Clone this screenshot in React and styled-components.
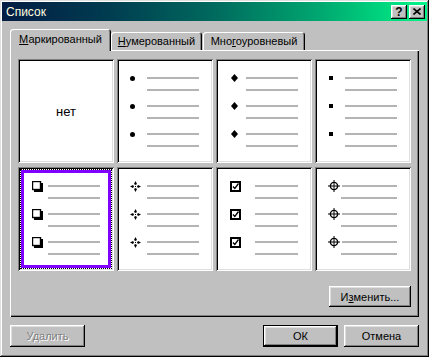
import React from 'react';
import styled, { createGlobalStyle, css } from 'styled-components';

const GlobalStyle = createGlobalStyle`
  html, body { margin: 0; padding: 0; background: #c0c0c0; }
  body { font-family: "Liberation Sans", Arial, sans-serif; font-size: 11px; color: #000; }
`;

const raised = css`
  box-shadow: inset -1px -1px #000, inset 1px 1px #fff, inset -2px -2px #808080, inset 2px 2px #dfdfdf;
`;

const Window = styled.div`
  width: 429px;
  height: 357px;
  box-sizing: border-box;
  padding: 2px;
  background: #c0c0c0;
  display: flex;
  flex-direction: column;
  box-shadow: inset -1px -1px #000, inset 1px 1px #dfdfdf, inset -2px -2px #808080, inset 2px 2px #fff;
`;

const TitleBar = styled.div`
  height: 19px;
  display: flex;
  align-items: center;
  padding: 0 2px 0 4px;
  background: linear-gradient(90deg, #041c44 0%, #003c50 25%, #006a5e 50%, #00a870 75%, #00f688 100%);
  color: #ffffe0;
  font-size: 12px;
`;

const TitleText = styled.div`
  flex: 1;
`;

const TitleButton = styled.div`
  width: 16px;
  height: 14px;
  margin-left: ${p => p.$gap || 0}px;
  background: #c0c0c0;
  ${raised};
  display: flex;
  align-items: center;
  justify-content: center;
  color: #000;
  font-weight: bold;
  font-size: 12px;
  line-height: 14px;
`;

const Body = styled.div`
  flex: 1;
  padding: 8px 8px 8px 8px;
  display: flex;
  flex-direction: column;
`;

const TabStrip = styled.div`
  height: 21px;
  display: flex;
  align-items: flex-end;
  position: relative;
  z-index: 1;
`;

const Tab = styled.div`
  box-sizing: border-box;
  width: ${p => p.$w}px;
  height: ${p => (p.$active ? 22 : 18)}px;
  margin-bottom: ${p => (p.$active ? -1 : 0)}px;
  margin-right: ${p => p.$mr || 0}px;
  background: #c0c0c0;
  border-radius: 3px 3px 0 0;
  box-shadow: inset 1px 1px #fff, inset -1px 0 #000, inset -2px 0 #808080;
  display: flex;
  align-items: center;
  justify-content: center;
  padding-bottom: ${p => (p.$active ? 2 : 0)}px;
  white-space: nowrap;
`;

const Panel = styled.div`
  padding: 9px 8px 10px 8px;
  background: #c0c0c0;
  box-shadow: inset 1px 1px #fff, inset -1px -1px #000, inset -2px -2px #808080;
  display: flex;
  flex-direction: column;
`;

const Grid = styled.div`
  display: grid;
  grid-template-columns: repeat(4, 96px);
  grid-auto-rows: 104px;
  column-gap: 3px;
  row-gap: 4px;
`;

const Cell = styled.div`
  position: relative;
  box-sizing: border-box;
  background: #fff;
  padding: 13px 14px 0 0;
  box-shadow: inset 1px 1px #808080, inset -1px -1px #fff, inset 2px 2px #000, inset -2px -2px #dfdfdf;
  display: flex;
  flex-direction: column;
  ${p => p.$selected && css`
    &::before {
      content: '';
      position: absolute;
      inset: 2px;
      border: 1px dotted #000;
      box-shadow: inset 0 0 0 3px #8000ff;
    }
  `}
`;

const NoneCell = styled(Cell)`
  padding: 0;
  align-items: center;
  justify-content: center;
  font-size: 13px;
`;

const Group = styled.div`
  height: 28px;
  display: flex;
  flex-direction: column;
`;

const Row = styled.div`
  height: 12px;
  display: flex;
  align-items: center;
`;

const Slot = styled.div`
  width: ${p => p.$w}px;
  flex: none;
  display: flex;
  align-items: center;
  padding-left: ${p => p.$x}px;
  box-sizing: border-box;
`;

const Line = styled.div`
  flex: 1;
  height: 2px;
  margin-left: ${p => p.$ml || 0}px;
  background: #b4b4b4;
`;

const Button = styled.div`
  box-sizing: border-box;
  width: ${p => p.$w}px;
  height: ${p => p.$h || 22}px;
  background: #c0c0c0;
  ${raised};
  display: flex;
  align-items: center;
  justify-content: center;
  color: ${p => (p.$disabled ? '#808080' : '#000')};
  text-shadow: ${p => (p.$disabled ? '1px 1px #fff' : 'none')};
  ${p => p.$default && css`
    border: 1px solid #000;
    box-shadow: inset -1px -1px #000, inset 1px 1px #fff, inset -2px -2px #808080, inset 2px 2px #dfdfdf;
  `}
`;

const PanelActions = styled.div`
  margin-top: 15px;
  display: flex;
  justify-content: flex-end;
`;

const Footer = styled.div`
  margin-top: 8px;
  display: flex;
  gap: 6px;
`;

const Spacer = styled.div`
  flex: 1;
`;

const Dot = () => (
  <svg width="5" height="5" viewBox="0 0 5 5"><circle cx="2.5" cy="2.5" r="2.5" fill="#000" /></svg>
);
const Diamond = () => (
  <svg width="7" height="8" viewBox="0 0 7 8"><path d="M3.5 0 L7 4 L3.5 8 L0 4Z" fill="#000" /></svg>
);
const SmallSquare = () => (
  <svg width="4" height="4" viewBox="0 0 4 4"><rect width="4" height="4" fill="#000" /></svg>
);
const ShadowBox = () => (
  <svg width="11" height="11" viewBox="0 0 11 11">
    <rect x="2" y="2" width="9" height="9" fill="#000" />
    <rect x="0.5" y="0.5" width="8" height="8" fill="#fff" stroke="#000" strokeWidth="1.4" />
  </svg>
);
const Star = () => (
  <svg width="11" height="11" viewBox="0 0 11 11" fill="#000">
    <path d="M5.5 0 L7 3 L5.5 4 L4 3Z" />
    <path d="M5.5 11 L7 8 L5.5 7 L4 8Z" />
    <path d="M0 5.5 L3 4 L4 5.5 L3 7Z" />
    <path d="M11 5.5 L8 4 L7 5.5 L8 7Z" />
    <rect x="5" y="5" width="1" height="1" />
  </svg>
);
const CheckBox = () => (
  <svg width="11" height="11" viewBox="0 0 11 11">
    <rect width="11" height="11" fill="#000" />
    <rect x="2" y="2" width="7" height="7" fill="#fff" />
    <path d="M3 5.5 L4.8 7.5 L8.5 2.5" fill="none" stroke="#000" strokeWidth="1.3" />
  </svg>
);
const Target = () => (
  <svg width="12" height="12" viewBox="0 0 12 12" fill="none" stroke="#000">
    <circle cx="6" cy="6" r="3.6" strokeWidth="1.4" />
    <path d="M6 0 V12 M0 6 H12" strokeWidth="1" />
  </svg>
);
const CloseGlyph = () => (
  <svg width="8" height="7" viewBox="0 0 8 7">
    <path d="M0.5 0.5 L7.5 6.5 M7.5 0.5 L0.5 6.5" stroke="#000" strokeWidth="1.6" />
  </svg>
);

const styles = [
  { key: 'dot', Icon: Dot, x: 13, line: 30, line2: 30 },
  { key: 'diamond', Icon: Diamond, x: 15, line: 30, line2: 30 },
  { key: 'square', Icon: SmallSquare, x: 14, line: 30, line2: 30 },
  { key: 'box', Icon: ShadowBox, x: 14, line: 30, line2: 30, selected: true },
  { key: 'star', Icon: Star, x: 13, line: 30, line2: 30 },
  { key: 'check', Icon: CheckBox, x: 14, line: 39, line2: 39 },
  { key: 'target', Icon: Target, x: 13, line: 27, line2: 26 },
];

const BulletCell = ({ Icon, x, line, line2, selected }) => (
  <Cell $selected={selected}>
    {[0, 1, 2].map(i => (
      <Group key={i}>
        <Row>
          <Slot $w={line} $x={x}><Icon /></Slot>
          <Line />
        </Row>
        <Row>
          <Line $ml={line2} />
        </Row>
      </Group>
    ))}
  </Cell>
);

export default function App() {
  return (
    <>
      <GlobalStyle />
      <Window>
        <TitleBar>
          <TitleText>Список</TitleText>
          <TitleButton>?</TitleButton>
          <TitleButton $gap={2}><CloseGlyph /></TitleButton>
        </TitleBar>
        <Body>
          <TabStrip>
            <Tab $active $w={101}><span><u>М</u>аркированный</span></Tab>
            <Tab $w={91} $mr={1}><span><u>Н</u>умерованный</span></Tab>
            <Tab $w={102}><span>Мно<u>г</u>оуровневый</span></Tab>
          </TabStrip>
          <Panel>
            <Grid>
              <NoneCell>нет</NoneCell>
              {styles.map(s => <BulletCell key={s.key} {...s} />)}
            </Grid>
            <PanelActions>
              <Button $w={82} $h={21}><span>И<u>з</u>менить...</span></Button>
            </PanelActions>
          </Panel>
          <Footer>
            <Button $w={75} $disabled>Удалить</Button>
            <Spacer />
            <Button $w={75} $default>ОК</Button>
            <Button $w={75}>Отмена</Button>
          </Footer>
        </Body>
      </Window>
    </>
  );
}
